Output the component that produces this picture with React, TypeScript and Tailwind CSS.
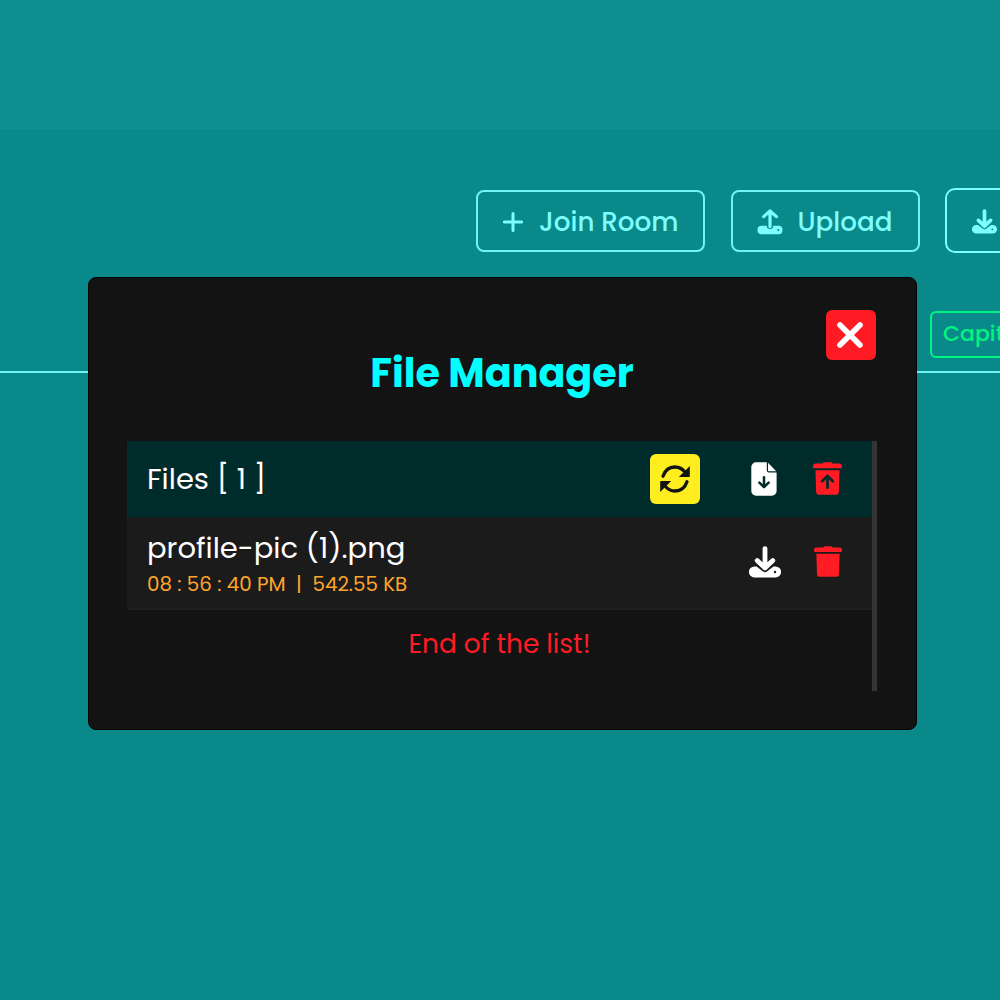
import React from "react";

type IconProps = { className?: string };

function PlusIcon({ className }: IconProps) {
  return (
    <svg viewBox="0 0 20 20" className={className} fill="none" stroke="currentColor" strokeWidth="3" strokeLinecap="round">
      <path d="M10 1.6v16.8M1.4 10h17.2" />
    </svg>
  );
}

function UploadIcon({ className }: IconProps) {
  return (
    <svg viewBox="0 0 26 26" className={className} fill="currentColor">
      <path
        fillRule="evenodd"
        d="M4.5 16.8H9.8V17.2C9.8 19 11 20 13 20S16.2 19 16.2 17.2V16.8H21.5A4 4 0 0 1 25.5 20.8V21.3A4 4 0 0 1 21.5 25.3H4.5A4 4 0 0 1 .5 21.3V20.8A4 4 0 0 1 4.5 16.8ZM21.2 19.9A1.1 1.1 0 1 0 21.2 22.1A1.1 1.1 0 1 0 21.2 19.9Z"
      />
      <path d="M13 17.4V3M6.6 7.6 13 2 19.4 7.6" fill="none" stroke="currentColor" strokeWidth="3.2" strokeLinecap="round" strokeLinejoin="round" />
    </svg>
  );
}

function DownloadIcon({ className }: IconProps) {
  return (
    <svg viewBox="0 0 32 32" className={className} fill="currentColor">
      <path
        fillRule="evenodd"
        d="M5.4 20.4H7.6L14 25.4Q16 27 18 25.4L24.4 20.4H26.6A5.4 5.4 0 0 1 26.6 31.4H5.4A5.4 5.4 0 0 1 5.4 20.4ZM26 24.8A1.2 1.2 0 1 0 26 27.2A1.2 1.2 0 1 0 26 24.8Z"
      />
      <path d="M16 2.6V21M8.2 14.6 16 22 23.8 14.6" fill="none" stroke="currentColor" strokeWidth="4.8" strokeLinecap="round" strokeLinejoin="round" />
    </svg>
  );
}

function CloseIcon({ className }: IconProps) {
  return (
    <svg viewBox="0 0 28 28" className={className} fill="none" stroke="currentColor" strokeWidth="5.6" strokeLinecap="round">
      <path d="M4 4 24 24M24 4 4 24" />
    </svg>
  );
}

function RefreshIcon({ className }: IconProps) {
  return (
    <svg viewBox="0 0 30 28" className={className}>
      <g fill="none" stroke="currentColor" strokeWidth="3.3">
        <path d="M3 11.2C5 5.5 9.5 2 14.8 2C19.3 2 22.8 4 25.2 7.4" strokeLinecap="round" />
        <path d="M27 16.8C25 22.5 20.5 26 15.2 26C10.7 26 7.2 24 4.8 20.6" strokeLinecap="round" />
      </g>
      <path d="M29.8 1V11.2Q29.8 12.1 28.9 12.1H18.8Z" fill="currentColor" />
      <path d="M.2 27V16.8Q.2 15.9 1.1 15.9H11.2Z" fill="currentColor" />
    </svg>
  );
}

function FileDownIcon({ className }: IconProps) {
  return (
    <svg viewBox="0 0 26 34" className={className}>
      <path d="M5 .3H15.8V8.2Q15.8 10.4 18 10.4H25.6V29A4.7 4.7 0 0 1 20.9 33.7H5A4.7 4.7 0 0 1 .3 29V5A4.7 4.7 0 0 1 5 .3Z" fill="currentColor" />
      <path d="M17 .8 25.2 9.2H18Q17 9.2 17 8.2Z" fill="currentColor" />
      <path d="M13 15.2V25M8.4 20.6 13 25.2 17.6 20.6" fill="none" stroke="#002b2b" strokeWidth="2.5" strokeLinecap="round" strokeLinejoin="round" />
    </svg>
  );
}

function TrashIcon({ className, restore = false }: IconProps & { restore?: boolean }) {
  return (
    <svg viewBox="0 0 28 32" preserveAspectRatio="none" className={className}>
      <path d="M9.2 1.5Q9.8 .2 11.4 .2H16.6Q18.2 .2 18.8 1.5H25.6Q28 1.8 28 4.2V5.2Q28 6.1 27 6.1H1Q0 6.1 0 5.2V4.2Q0 1.8 2.4 1.5Z" fill="currentColor" />
      <path d="M2.4 8.1H25.6L25 28.8Q24.8 31.8 22 31.8H6Q3.2 31.8 3 28.8Z" fill="currentColor" />
      {restore && (
        <path d="M14 25V13.8M8.8 18.7 14 13.4 19.2 18.7" fill="none" stroke="#012b2b" strokeWidth="2.6" strokeLinecap="round" strokeLinejoin="round" />
      )}
    </svg>
  );
}

export default function App() {
  return (
    <div className="relative h-[1000px] w-[1000px] overflow-hidden bg-[#09898a] font-['Poppins','Inter',sans-serif]">
      <header className="h-[129px] bg-[#0f8e90]" />

      <nav className="ml-[476px] mt-[59px] flex w-[700px] items-center text-[26.2px] font-medium leading-none text-[#7dfdfe]">
        <button className="flex h-[62px] w-[229px] shrink-0 items-center whitespace-nowrap rounded-lg border-2 border-[#6ff3f4] pl-[25px]">
          <PlusIcon className="mt-0.5 h-5 w-5 shrink-0" />
          <span className="ml-[16px] mt-1">Join Room</span>
        </button>
        <button className="ml-[26px] flex h-[62px] w-[189px] shrink-0 items-center whitespace-nowrap rounded-lg border-2 border-[#6ff3f4] pl-6">
          <UploadIcon className="mt-0.5 h-[26px] w-[26px] shrink-0" />
          <span className="ml-[14.5px] mt-1">Upload</span>
        </button>
        <button className="ml-[25px] flex h-[65px] w-[210px] shrink-0 items-center rounded-[10px] border-2 border-[#7dfdfe] pl-[25px]">
          <DownloadIcon className="mt-0.5 h-[25px] w-[25px] shrink-0" />
        </button>
      </nav>

      <div className="flex h-[120px] border-b-2 border-[#6ff3f4] pl-[930px] pt-[58px]">
        <span className="flex h-[47px] w-[140px] shrink-0 items-center rounded-md border-2 border-[#00f580] pb-0.5 pl-[11px] text-[22px] font-medium leading-none text-[#00f580]">
          Capital
        </span>
      </div>

      <section role="dialog" className="absolute left-[88px] top-[277px] flex h-[453px] w-[829px] flex-col rounded-lg border border-[#080303] bg-[#131313] pl-[38px] pr-[39px]">
        <button className="ml-auto mr-px mt-8 flex h-[50px] w-[50px] shrink-0 items-center justify-center rounded-md bg-[#ff1b24] pr-[2px] text-white">
          <CloseIcon className="h-7 w-7" />
        </button>
        <h1 className="-mt-[12px] h-[50px] text-center text-[39.7px] font-bold leading-[50px] text-[#00ffff]">File Manager</h1>

        <div className="mt-[43px] flex h-[250px] w-[750px]">
          <div className="w-[745px]">
            <div className="flex h-[76px] items-center bg-[#002b2b] pl-5 text-white">
              <span className="whitespace-pre text-[29px] leading-none">Files [ 1 ]</span>
              <div className="ml-auto mr-[30px] flex items-center">
                <button className="flex h-[50px] w-[50px] items-center justify-center rounded-md bg-[#ffee1f] text-[#131313]">
                  <RefreshIcon className="h-7 w-[30px]" />
                </button>
                <FileDownIcon className="ml-[51px] h-[34px] w-[26px]" />
                <TrashIcon restore className="mb-px ml-9 h-[33px] w-[29px] text-[#ff1b24]" />
              </div>
            </div>
            <div className="flex h-[93px] items-center border-b border-[#202020] bg-[#1b1b1b] pl-5">
              <div className="mt-[3px] whitespace-pre leading-none">
                <div className="text-[29px] text-white">profile-pic (1).png</div>
                <div className="mt-3 text-[19.85px] text-[#ffa52c]">08 : 56 : 40 PM  |  542.55 KB</div>
              </div>
              <div className="mb-0.5 ml-auto mr-[30px] flex items-center">
                <DownloadIcon className="h-8 w-8 text-white" />
                <TrashIcon className="mb-px ml-[33px] h-[31px] w-7 text-[#ff1b24]" />
              </div>
            </div>
            <p className="mt-[19px] text-center text-[26.4px] leading-[30px] text-[#ff1b24]">End of the list!</p>
          </div>
          <div className="w-[5px] bg-[#343434]" />
        </div>
      </section>
    </div>
  );
}
